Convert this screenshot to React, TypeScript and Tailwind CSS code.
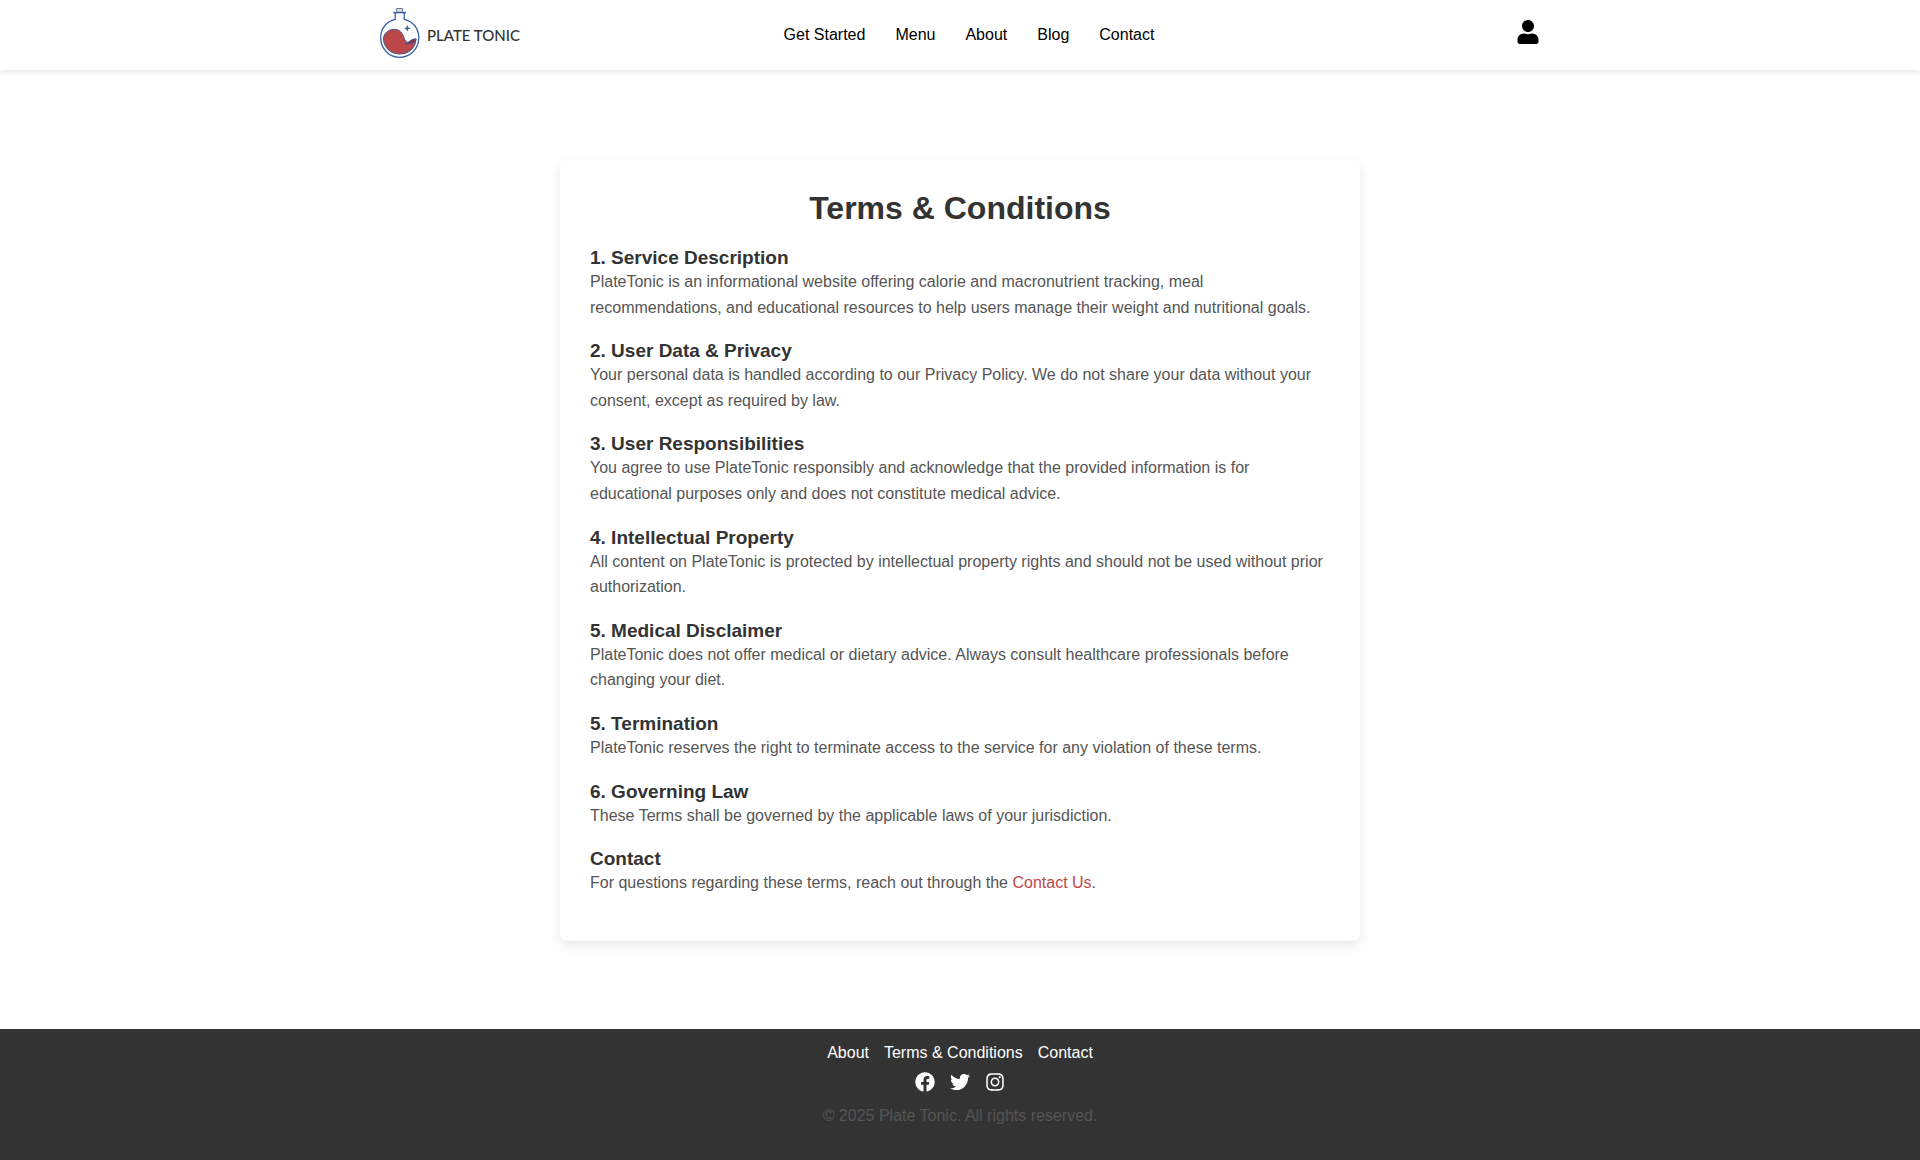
import { FaUser, FaFacebook, FaTwitter, FaInstagram } from "react-icons/fa";

const navLinks = ["Get Started", "Menu", "About", "Blog", "Contact"];
const footerLinks = ["About", "Terms & Conditions", "Contact"];

const sections = [
  {
    title: "1. Service Description",
    body: "PlateTonic is an informational website offering calorie and macronutrient tracking, meal recommendations, and educational resources to help users manage their weight and nutritional goals.",
  },
  {
    title: "2. User Data & Privacy",
    body: "Your personal data is handled according to our Privacy Policy. We do not share your data without your consent, except as required by law.",
  },
  {
    title: "3. User Responsibilities",
    body: "You agree to use PlateTonic responsibly and acknowledge that the provided information is for educational purposes only and does not constitute medical advice.",
  },
  {
    title: "4. Intellectual Property",
    body: "All content on PlateTonic is protected by intellectual property rights and should not be used without prior authorization.",
  },
  {
    title: "5. Medical Disclaimer",
    body: "PlateTonic does not offer medical or dietary advice. Always consult healthcare professionals before changing your diet.",
  },
  {
    title: "5. Termination",
    body: "PlateTonic reserves the right to terminate access to the service for any violation of these terms.",
  },
  {
    title: "6. Governing Law",
    body: "These Terms shall be governed by the applicable laws of your jurisdiction.",
  },
];

function FlaskLogo() {
  return (
    <svg viewBox="0 0 40 50" className="h-[50px] w-10 shrink-0" fill="none" aria-hidden="true">
      <rect x="16.7" y="0.6" width="5.8" height="4" fill="#efd9bd" stroke="#3f5f9f" strokeWidth="0.8" />
      <path
        d="M15.2 5V11.3C6.6 13.2 0.7 20.4 0.7 29.8C0.7 40.9 9.2 49.3 19.6 49.3C30 49.3 38.8 40.9 38.8 29.8C38.8 20.4 33 13.2 24.2 11.3V5"
        stroke="#3560a8"
        strokeWidth="1.3"
      />
      <path d="M13.4 4.6H26" stroke="#3560a8" strokeWidth="1.5" />
      <path
        d="M3.5 31.5C3 26.5 7.8 21.3 14 21.3C19.8 21.3 22.6 25.2 23.8 29.4C24.7 32.6 27.2 35.3 30.2 35.3C33 35.3 34.5 33.5 36 31.1C35.6 40.4 28.6 46 19.7 46C10.8 46 4.2 40 3.5 31.5Z"
        fill="#bc4749"
        stroke="#3f5590"
        strokeWidth="1"
      />
      <path d="M26 35.2C29.5 34 31.5 30.6 36 30.8C35.8 34 32 36.6 26 35.2Z" fill="#8d2f42" stroke="#3f5590" strokeWidth="0.9" />
      <path d="M27.3 17L28.3 19.4L30.7 20.3L28.3 21.2L27.3 23.6L26.3 21.2L23.9 20.3L26.3 19.4Z" fill="#3f5f8f" />
    </svg>
  );
}

export default function App() {
  return (
    <div className="flex min-h-screen flex-col bg-white font-['Liberation_Sans',Arial,sans-serif] text-base">
      <header className="shadow-[0_2px_5px_rgba(0,0,0,0.1)]">
        <div className="mx-auto flex h-[70px] max-w-[1200px] items-center justify-between px-5">
          <a href="#" className="flex w-36 items-center gap-[7px] pb-1 whitespace-nowrap">
            <FlaskLogo />
            <span className="pt-1 font-['Lato',sans-serif] text-[15px] font-medium text-[#333]">PLATE TONIC</span>
          </a>
          <nav className="flex gap-[30px] text-black">
            {navLinks.map((label) => (
              <a key={label} href="#">
                {label}
              </a>
            ))}
          </nav>
          <div className="flex w-[126px] justify-end pb-1.5">
            <button type="button" aria-label="Account" className="text-black">
              <FaUser className="size-6" />
            </button>
          </div>
        </div>
      </header>

      <main className="flex-1 px-5 pt-[90px] pb-[88px]">
        <article className="mx-auto max-w-[800px] rounded-lg px-[30px] pt-[30px] pb-[25px] text-[#333] shadow-[0_4px_12px_rgba(0,0,0,0.1)]">
          <h1 className="mb-5 text-center text-[32px] leading-[37px] font-bold">Terms &amp; Conditions</h1>
          {sections.map((section) => (
            <section key={section.title} className="mb-5">
              <h2 className="text-[19px] leading-[22px] font-bold">{section.title}</h2>
              <p className="leading-[1.6] text-[#555]">{section.body}</p>
            </section>
          ))}
          <section className="mb-5">
            <h2 className="text-[19px] leading-[22px] font-bold">Contact</h2>
            <p className="leading-[1.6] text-[#555]">
              For questions regarding these terms, reach out through the{" "}
              <a href="#" className="text-[#bc4749]">
                Contact Us
              </a>
              .
            </p>
          </section>
        </article>
      </main>

      <footer className="flex flex-col items-center bg-[#333] pt-3 pb-8 text-white">
        <nav className="flex gap-[15px]">
          {footerLinks.map((label) => (
            <a key={label} href="#">
              {label}
            </a>
          ))}
        </nav>
        <div className="mt-[7px] flex gap-[15px]">
          <a href="#" aria-label="Facebook">
            <FaFacebook className="size-5" />
          </a>
          <a href="#" aria-label="Twitter">
            <FaTwitter className="size-5" />
          </a>
          <a href="#" aria-label="Instagram">
            <FaInstagram className="size-5" />
          </a>
        </div>
        <p className="mt-3 text-[#555]">© 2025 Plate Tonic. All rights reserved.</p>
      </footer>
    </div>
  );
}
